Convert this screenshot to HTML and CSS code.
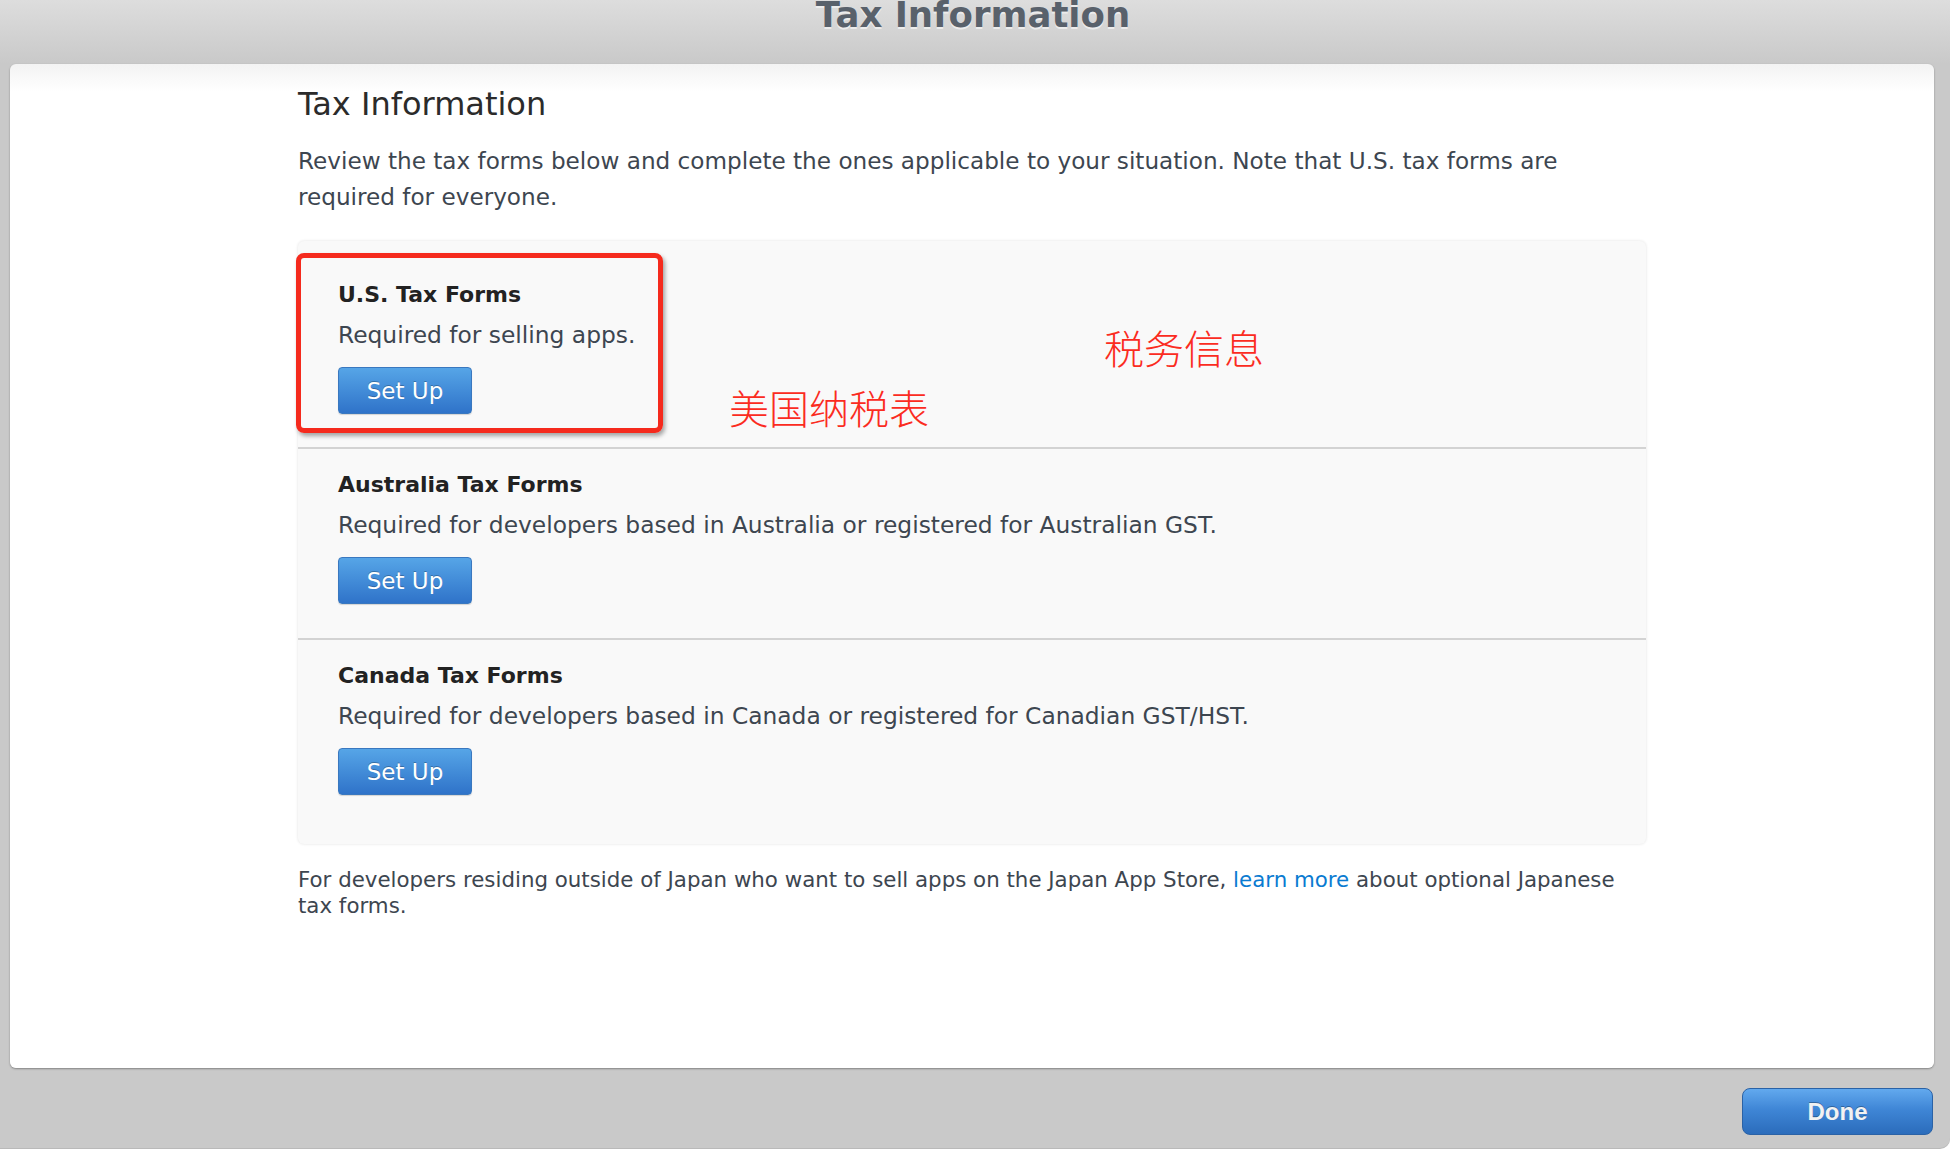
FILE: index.html
```html
<!DOCTYPE html>
<html lang="en">
<head>
<meta charset="utf-8">
<title>Tax Information</title>
<link rel="stylesheet" href="styles.css">
</head>
<body>
<div class="window">
  <header class="titlebar">
    <h1 class="window-title">Tax Information</h1>
  </header>
  <main class="panel">
    <div class="content">
      <h2 class="page-title">Tax Information</h2>
      <p class="intro">Review the tax forms below and complete the ones applicable to your situation. Note that U.S. tax forms are required for everyone.</p>
      <div class="card">
        <section class="form-section first">
          <h3 class="form-title">U.S. Tax Forms</h3>
          <p class="form-desc">Required for selling apps.</p>
          <button class="setup-btn">Set Up</button>
        </section>
        <section class="form-section">
          <h3 class="form-title">Australia Tax Forms</h3>
          <p class="form-desc">Required for developers based in Australia or registered for Australian GST.</p>
          <button class="setup-btn">Set Up</button>
        </section>
        <section class="form-section last">
          <h3 class="form-title">Canada Tax Forms</h3>
          <p class="form-desc">Required for developers based in Canada or registered for Canadian GST/HST.</p>
          <button class="setup-btn">Set Up</button>
        </section>
        <div class="highlight-box"></div>
        <span class="note note-us">美国纳税表</span>
        <span class="note note-tax">税务信息</span>
      </div>
      <p class="footnote">For developers residing outside of Japan who want to sell apps on the Japan App Store, <a href="#" class="link">learn more</a> about optional Japanese tax forms.</p>
    </div>
  </main>
  <footer class="bottombar">
    <button class="done-btn">Done</button>
  </footer>
</div>
</body>
</html>
```

FILE: styles.css
```css
* { box-sizing: border-box; }
html, body { margin: 0; padding: 0; }
body {
  background: #ffffff;
  width: 1956px;
  height: 1150px;
  overflow: hidden;
  font-family: "DejaVu Sans", "Liberation Sans", sans-serif;
}
.window {
  width: 1950px;
  height: 1148px;
  background: #c9c9c9;
  border-bottom-right-radius: 10px;
  box-shadow: 0 1px 0 #b9b9b9;
  display: flex;
  flex-direction: column;
}
.titlebar {
  height: 64px;
  flex: none;
  background: linear-gradient(#dddddd, #c9c9c9);
  overflow: hidden;
}
.window-title {
  margin: -5px 0 0 0;
  padding-right: 4px;
  text-align: center;
  font-family: "DejaVu Sans", sans-serif;
  font-weight: bold;
  font-size: 35.5px;
  line-height: 40px;
  color: #59616b;
  text-shadow: 0 2px 0 #ececec;
}
.panel {
  flex: none;
  height: 1004px;
  margin: 0 16px 0 10px;
  background: linear-gradient(#f3f3f3, #ffffff 28px);
  border-radius: 6px;
  box-shadow: 0 1px 2px rgba(0,0,0,0.35);
}
.content {
  padding: 20px 0 0 288px;
  width: 1636px;
  color: #3d4650;
}
.page-title {
  margin: 0;
  font-weight: 400;
  font-size: 32px;
  line-height: 40px;
  color: #2b2b2b;
}
.intro {
  margin: 19px 0 0 0;
  font-size: 23.15px;
  line-height: 36px;
  width: 1348px;
}
.card {
  position: relative;
  margin-top: 26px;
  width: 1348px;
  background: #f9f9f9;
  border-radius: 6px;
  box-shadow: 0 0 3px rgba(0,0,0,0.12);
}
.form-section {
  padding: 21px 0 34px 40px;
  border-bottom: 2px solid #d3d3d3;
}
.form-section.first { padding-top: 39px; padding-bottom: 33px; }
.form-section.last { border-bottom: none; padding-bottom: 49px; }
.form-title {
  margin: 0;
  font-size: 22px;
  line-height: 30px;
  font-weight: bold;
  color: #222222;
}
.form-desc {
  margin: 10px 0 0 0;
  font-size: 23.35px;
  line-height: 30px;
}
.setup-btn {
  display: block;
  margin-top: 17px;
  width: 134px;
  height: 47px;
  border: 1px solid #3a78bf;
  border-radius: 4px;
  background: linear-gradient(#56a5e7, #2f73c9);
  color: #ffffff;
  font-family: "DejaVu Sans", sans-serif;
  font-size: 23px;
  text-shadow: 0 -1px 0 rgba(0,0,0,0.25);
  box-shadow: 0 1px 1px rgba(0,0,0,0.15);
  padding: 0;
}
.highlight-box {
  position: absolute;
  left: -2px;
  top: 12px;
  width: 367px;
  height: 180px;
  border: 5px solid #f52a1d;
  border-radius: 8px;
  box-shadow: 2px 3px 4px rgba(0,0,0,0.35);
}
.note {
  position: absolute;
  font-family: "Noto Sans CJK SC", sans-serif;
  font-weight: 300;
  font-size: 40px;
  line-height: 40px;
  color: #fb2c1f;
  white-space: nowrap;
}
.note-us { left: 431px; top: 146px; }
.note-tax { left: 806px; top: 86px; }
.footnote {
  margin: 23px 0 0 0;
  font-size: 21.35px;
  line-height: 26px;
  width: 1348px;
}
.link { color: #0a7bd1; text-decoration: none; }
.bottombar {
  flex: 1;
  display: flex;
  justify-content: flex-end;
  align-items: flex-start;
  padding: 20px 17px 0 0;
}
.done-btn {
  width: 191px;
  height: 47px;
  border: 1px solid #2a62a6;
  border-radius: 8px;
  background: linear-gradient(#62a9ee, #3f86d6 45%, #2b6cbb);
  color: #f2f2f2;
  font-family: "Liberation Sans", Arial, sans-serif;
  font-weight: bold;
  font-size: 24px;
  text-shadow: 0 -1px 0 rgba(0,0,0,0.3);
  padding: 0;
}
```
